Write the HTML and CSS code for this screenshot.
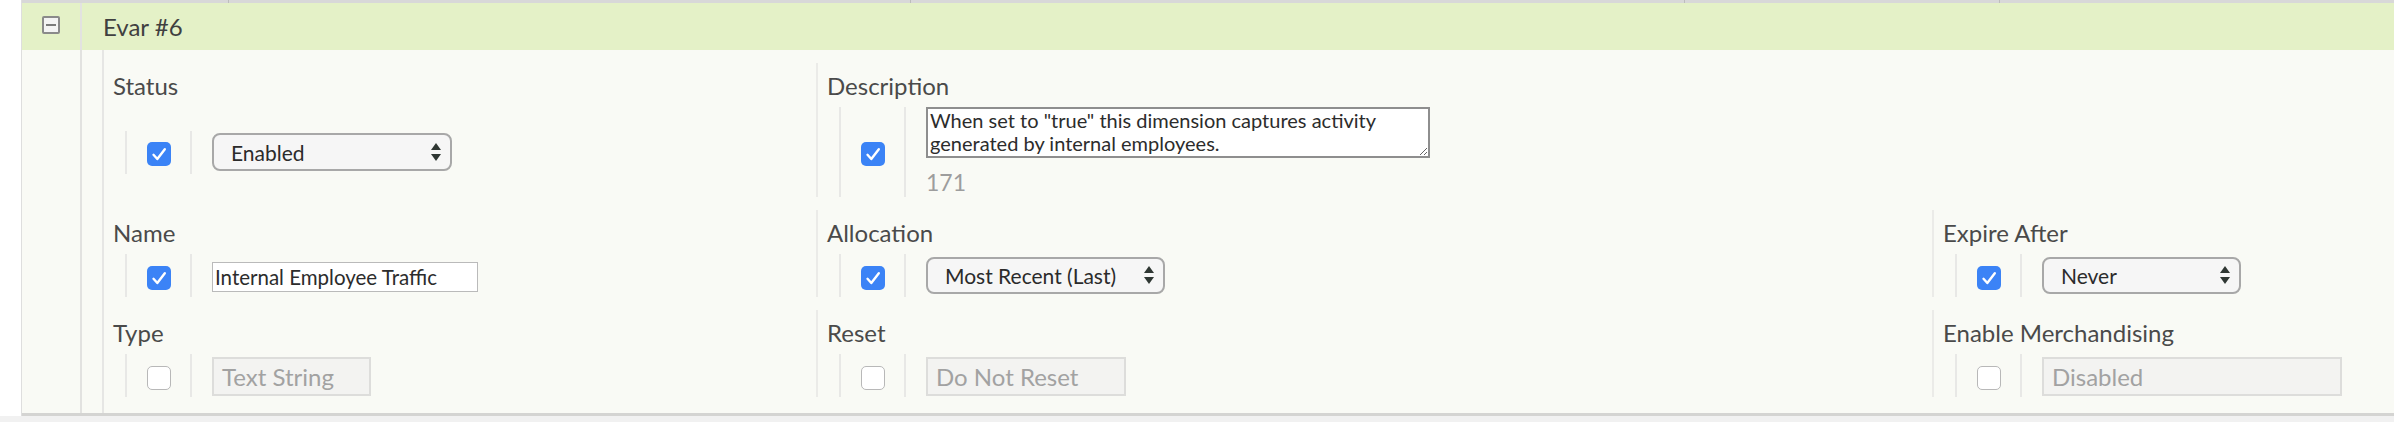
FILE: index.html
```html
<!DOCTYPE html>
<html lang="en">
<head>
    <meta charset="UTF-8">
    <title>Evar #6</title>
    <link rel="stylesheet" href="styles.css">
</head>
<body>
    <div class="evar">
        <!-- bottom edge of the previous evar row -->
        <div class="prev-row">
            <span class="seg seg1"></span>
            <span class="seg seg2"></span>
            <span class="seg seg3"></span>
            <span class="seg seg4"></span>
            <span class="seg seg5"></span>
        </div>

        <div class="evar-head">
            <div class="toggle-cell"><span class="toggle"></span></div>
            <div class="evar-title">Evar #6</div>
        </div>

        <div class="evar-body">
            <div class="toggle-cell"></div>
            <div class="panel">

                <div class="field-row">
                    <div class="field col1">
                        <div class="field-label">Status</div>
                        <div class="field-area">
                            <div class="ctrl">
                                <div class="ctrl-check"><span class="check on"><svg viewBox="0 0 24 24"><path d="M6.5 12.8 L10.3 17 L17.8 7.2"/></svg></span></div>
                                <div class="ctrl-input">
                                    <div class="select sel-status"><span>Enabled</span><svg class="arrows" viewBox="0 0 10 19"><polygon points="5,0 10,7 0,7"/><polygon points="0,11 10,11 5,18"/></svg></div>
                                </div>
                            </div>
                        </div>
                    </div>
                    <div class="field col2">
                        <div class="field-label">Description</div>
                        <div class="field-area">
                            <div class="ctrl">
                                <div class="ctrl-check"><span class="check on"><svg viewBox="0 0 24 24"><path d="M6.5 12.8 L10.3 17 L17.8 7.2"/></svg></span></div>
                                <div class="ctrl-input stacked">
                                    <textarea class="desc" rows="2">When set to "true" this dimension captures activity generated by internal employees.</textarea>
                                    <div class="counter">171</div>
                                </div>
                            </div>
                        </div>
                    </div>
                    <div class="field col3 empty"></div>
                </div>

                <div class="field-row">
                    <div class="field col1">
                        <div class="field-label">Name</div>
                        <div class="field-area">
                            <div class="ctrl">
                                <div class="ctrl-check"><span class="check on"><svg viewBox="0 0 24 24"><path d="M6.5 12.8 L10.3 17 L17.8 7.2"/></svg></span></div>
                                <div class="ctrl-input">
                                    <input class="text-input" type="text" value="Internal Employee Traffic">
                                </div>
                            </div>
                        </div>
                    </div>
                    <div class="field col2">
                        <div class="field-label">Allocation</div>
                        <div class="field-area">
                            <div class="ctrl">
                                <div class="ctrl-check"><span class="check on"><svg viewBox="0 0 24 24"><path d="M6.5 12.8 L10.3 17 L17.8 7.2"/></svg></span></div>
                                <div class="ctrl-input">
                                    <div class="select sel-alloc"><span>Most Recent (Last)</span><svg class="arrows" viewBox="0 0 10 19"><polygon points="5,0 10,7 0,7"/><polygon points="0,11 10,11 5,18"/></svg></div>
                                </div>
                            </div>
                        </div>
                    </div>
                    <div class="field col3">
                        <div class="field-label">Expire After</div>
                        <div class="field-area">
                            <div class="ctrl">
                                <div class="ctrl-check"><span class="check on"><svg viewBox="0 0 24 24"><path d="M6.5 12.8 L10.3 17 L17.8 7.2"/></svg></span></div>
                                <div class="ctrl-input">
                                    <div class="select sel-expire"><span>Never</span><svg class="arrows" viewBox="0 0 10 19"><polygon points="5,0 10,7 0,7"/><polygon points="0,11 10,11 5,18"/></svg></div>
                                </div>
                            </div>
                        </div>
                    </div>
                </div>

                <div class="field-row">
                    <div class="field col1">
                        <div class="field-label">Type</div>
                        <div class="field-area">
                            <div class="ctrl">
                                <div class="ctrl-check"><span class="check"></span></div>
                                <div class="ctrl-input">
                                    <div class="disabled dis-type">Text String</div>
                                </div>
                            </div>
                        </div>
                    </div>
                    <div class="field col2">
                        <div class="field-label">Reset</div>
                        <div class="field-area">
                            <div class="ctrl">
                                <div class="ctrl-check"><span class="check"></span></div>
                                <div class="ctrl-input">
                                    <div class="disabled dis-reset">Do Not Reset</div>
                                </div>
                            </div>
                        </div>
                    </div>
                    <div class="field col3">
                        <div class="field-label">Enable Merchandising</div>
                        <div class="field-area">
                            <div class="ctrl">
                                <div class="ctrl-check"><span class="check"></span></div>
                                <div class="ctrl-input">
                                    <div class="disabled dis-merch">Disabled</div>
                                </div>
                            </div>
                        </div>
                    </div>
                </div>

            </div>
        </div>
    </div>
    <div class="page-rest"></div>
</body>
</html>
```

FILE: styles.css
```css
/* General */
body {
    margin: 0;
    font-family: 'Lato', 'Open Sans', sans-serif;
    background-color: #fff;
    color: #4a4a4a;
}

.evar {
    margin-left: 21px;
    border-left: 1px solid #dedede;
}

/* previous row edge */
.prev-row {
    display: flex;
    height: 3px;
    background: #d8d8d8;
}

.seg {
    height: 3px;
    border-right: 1px solid #bcbcbc;
}

.seg1 { width: 206px; }
.seg2 { width: 681px; }
.seg3 { width: 773px; }
.seg4 { width: 314px; }
.seg5 { flex: 1; border-right: none; }

/* Header */
.evar-head {
    display: flex;
    height: 47px;
    background: #e4f1c7;
}

.toggle-cell {
    width: 58px;
    border-right: 2px solid #e2e2e0;
    display: flex;
    justify-content: center;
    align-items: center;
}

.toggle {
    width: 18px;
    height: 18px;
    box-sizing: border-box;
    border: 2px solid #8a8a8a;
    background: #f3f3f3;
    border-radius: 2px;
    display: flex;
    justify-content: center;
    align-items: center;
    margin-top: -3px;
}

.toggle::after {
    content: "";
    width: 10px;
    height: 2px;
    background: #7a7a7a;
}

.evar-title {
    padding-left: 21px;
    line-height: 47px;
    font-size: 24px;
    color: #404040;
}

/* Body */
.evar-body {
    display: flex;
    background: #f9faf5;
    border-bottom: 3px solid #d4d4d2;
}

.evar-body .toggle-cell {
    align-items: stretch;
}

.panel {
    flex: 1;
    margin-left: 20px;
    border-left: 2px solid #e6e6e4;
    padding: 13px 0 16px;
    display: flex;
    flex-direction: column;
    gap: 13px;
}

.field-row {
    display: flex;
}

.field {
    display: flex;
    flex-direction: column;
    padding-left: 9px;
}

.col1 { width: 712px; box-sizing: border-box; }
.col2 { width: 1116px; box-sizing: border-box; border-left: 2px solid #ebebe8; }
.col3 { flex: 1; border-left: 2px solid #ebebe8; }
.col3.empty { border-left: none; }

.field-label {
    height: 44px;
    box-sizing: border-box;
    padding-top: 8px;
    line-height: 29px;
    font-size: 24px;
    color: #4a4a4a;
}

.field-area {
    flex: 1;
    display: flex;
    align-items: center;
}

.ctrl {
    display: flex;
    margin-left: 12px;
    border-left: 2px solid #e8e8e6;
    min-height: 43px;
}

.ctrl-check {
    width: 63px;
    display: flex;
    justify-content: center;
    align-items: center;
}

.ctrl-input {
    border-left: 2px solid #e8e8e6;
    padding-left: 20px;
    display: flex;
    align-items: center;
}

.ctrl-input.stacked {
    flex-direction: column;
    align-items: flex-start;
}

/* Checkboxes */
.check {
    width: 24px;
    height: 24px;
    box-sizing: border-box;
    border-radius: 5px;
    border: 1.5px solid #b8b8b8;
    background: #fff;
    margin-top: 4px;
}

.check.on {
    border: none;
    background: #3b83f6;
}

.check svg {
    display: block;
    width: 24px;
    height: 24px;
    fill: none;
    stroke: #fff;
    stroke-width: 2.4;
    stroke-linecap: round;
    stroke-linejoin: round;
}

/* Selects */
.select {
    display: flex;
    justify-content: space-between;
    align-items: center;
    box-sizing: border-box;
    height: 37px;
    padding: 0 9px 0 17px;
    border: 2px solid #a8a8a8;
    border-radius: 8px;
    background: #f6f6f6;
    font-size: 21px;
    color: #2b2b2b;
}

.sel-status { width: 240px; height: 38px; }
.sel-alloc { width: 239px; }
.sel-expire { width: 199px; }

.arrows {
    width: 10px;
    height: 19px;
    fill: #2f3733;
}

/* Text inputs */
.text-input {
    width: 266px;
    height: 30px;
    box-sizing: border-box;
    border: 1px solid #bababa;
    background: #fff;
    padding: 0 2px;
    font-family: 'Lato', 'Open Sans', sans-serif;
    font-size: 20.5px;
    color: #2c2c2c;
    margin-top: 2px;
}

.desc {
    display: block;
    width: 504px;
    height: 51px;
    box-sizing: border-box;
    border: 2px solid #8e8e8e;
    padding: 0 2px;
    margin: 0;
    font-family: 'Lato', 'Open Sans', sans-serif;
    font-size: 20px;
    line-height: 23px;
    color: #2c2c2c;
    background: #fff;
    resize: both;
    overflow: hidden;
}

.counter {
    margin-top: 10px;
    line-height: 29px;
    font-size: 23px;
    color: #9d9d9d;
}

/* Disabled fields */
.disabled {
    height: 39px;
    box-sizing: border-box;
    border: 2px solid #dddddb;
    background: #f3f3f1;
    padding-left: 8px;
    line-height: 35px;
    font-size: 24px;
    color: #a2a2a2;
    margin-top: 2px;
}

.dis-type { width: 159px; }
.dis-reset { width: 200px; }
.dis-merch { width: 300px; }

.page-rest {
    height: 20px;
    background: #f1f1f1;
}
```
